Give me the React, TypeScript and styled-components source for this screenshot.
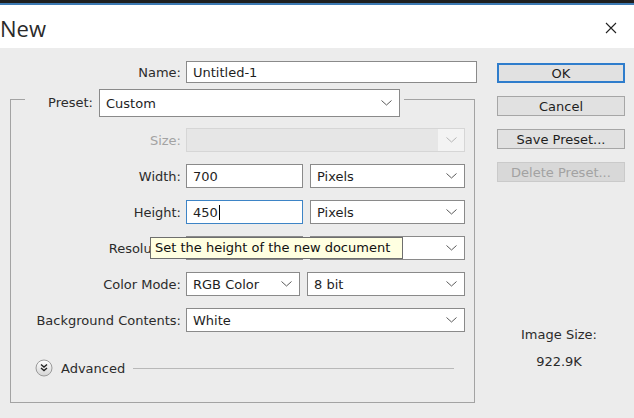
import React from "react";
import styled, { createGlobalStyle } from "styled-components";

const GlobalStyle = createGlobalStyle`
	html, body {
		margin: 0;
		padding: 0;
		background: #ececec;
		font-family: "DejaVu Sans", "Liberation Sans", sans-serif;
		font-size: 13px;
		color: #2b2b2b;
	}
`;

const Window = styled.div`
	width: 634px;
	height: 418px;
	display: flex;
	flex-direction: column;
	overflow: hidden;
	background: #ececec;
`;

const TopStrip = styled.div`
	height: 3px;
	background: #1f1f1f;
	border-bottom: 2px solid #3d7ab3;
`;

const TitleBar = styled.div`
	height: 43px;
	background: #ffffff;
	display: flex;
	align-items: center;
	justify-content: space-between;
	padding-right: 16px;
`;

const Title = styled.div`
	font-family: "Open Sans", "Noto Sans", sans-serif;
	font-size: 22px;
	color: #2a2a2a;
	margin-top: 2px;
`;

const CloseButton = styled.div`
	width: 14px;
	height: 14px;
	display: flex;
	align-items: center;
	justify-content: center;
	margin-top: 2px;
`;

const Body = styled.div`
	display: flex;
	flex: 1;
`;

const FormColumn = styled.div`
	width: 477px;
	display: flex;
	flex-direction: column;
`;

const Row = styled.div`
	display: grid;
	grid-template-columns: ${(p: { $label: number }) => p.$label}px 1fr;
	column-gap: 5px;
	align-items: center;
	height: 24px;
`;

const NameRow = styled(Row)`
	margin-top: 13px;
	height: 22px;
`;

const Label = styled.div<{ $disabled?: boolean }>`
	text-align: right;
	white-space: nowrap;
	overflow: hidden;
	color: ${(p) => (p.$disabled ? "#a3a3a3" : "#2b2b2b")};
`;

const Input = styled.div<{ $focused?: boolean; $width?: number }>`
	box-sizing: border-box;
	height: 100%;
	width: ${(p) => (p.$width ? `${p.$width}px` : "100%")};
	background: #ffffff;
	border: 1px solid ${(p) => (p.$focused ? "#3d84c6" : "#8a8a8a")};
	display: flex;
	align-items: center;
	padding-left: 6px;
	color: #1e1e1e;
	position: relative;
`;

const Caret = styled.span`
	display: inline-block;
	width: 1px;
	height: 15px;
	background: #000;
	margin-left: 1px;
`;

const Select = styled.div<{ $width?: number; $disabled?: boolean }>`
	box-sizing: border-box;
	height: 100%;
	width: ${(p) => (p.$width ? `${p.$width}px` : "auto")};
	flex: ${(p) => (p.$width ? "none" : "1")};
	background: ${(p) => (p.$disabled ? "#e6e6e6" : "#ffffff")};
	border: 1px solid ${(p) => (p.$disabled ? "#d6d6d6" : "#8a8a8a")};
	display: flex;
	align-items: center;
	justify-content: space-between;
	padding-left: 6px;
	color: #1e1e1e;
`;

const ChevronBox = styled.div<{ $disabled?: boolean }>`
	width: 26px;
	height: 100%;
	display: flex;
	align-items: center;
	justify-content: center;
	background: ${(p) => (p.$disabled ? "#f3f3f3" : "transparent")};
`;

const FieldPair = styled.div`
	display: flex;
	gap: 7px;
	height: 100%;
	position: relative;
`;

const Group = styled.fieldset`
	margin: 6px 2px 0 10px;
	padding: 0 9px 24px 0;
	border: 1px solid #a3a3a3;
	display: flex;
	flex-direction: column;
	gap: 12px;
	min-width: 0;
`;

const Legend = styled.legend`
	margin-left: 14px;
	padding: 0 4px;
	height: 20px;
	display: flex;
	align-items: flex-start;
	gap: 6px;
`;

const PresetLabel = styled.div`
	width: 64px;
	height: 28px;
	line-height: 28px;
	text-align: right;
`;

const PresetSelect = styled(Select)`
	height: 28px;
	flex: none;
	width: 301px;
`;

const FirstRow = styled(Row)`
	margin-top: 19px;
`;

const Tooltip = styled.div`
	position: absolute;
	left: -36px;
	top: 37px;
	width: 253px;
	height: 22px;
	box-sizing: border-box;
	background: #ffffe1;
	border: 1px solid #6e6e6e;
	color: #111;
	padding-left: 4px;
	line-height: 20px;
	white-space: nowrap;
	z-index: 2;
`;

const AdvancedRow = styled.div`
	margin-top: 14px;
	display: flex;
	align-items: center;
	height: 20px;
	padding-left: 24px;
	gap: 8px;
`;

const AdvancedRule = styled.div`
	flex: 1;
	height: 1px;
	background: #b8b8b8;
	margin: 0 11px 0 0;
`;

const ButtonColumn = styled.div`
	width: 128px;
	margin-left: 20px;
	padding-top: 15px;
	display: flex;
	flex-direction: column;
	gap: 13px;
`;

const Button = styled.div<{ $primary?: boolean; $disabled?: boolean }>`
	box-sizing: border-box;
	height: 20px;
	display: flex;
	align-items: center;
	justify-content: center;
	background: ${(p) => (p.$disabled ? "#d8d8d8" : "#e1e1e1")};
	border: ${(p) => (p.$primary ? "2px solid #2f7dcc" : p.$disabled ? "1px solid #cacaca" : "1px solid #a6a6a6")};
	color: ${(p) => (p.$disabled ? "#a2a2a2" : "#1e1e1e")};
`;

const ImageSize = styled.div`
	margin-top: 132px;
	margin-right: 4px;
	display: flex;
	flex-direction: column;
	align-items: center;
	gap: 11px;
	line-height: 16px;
	color: #2b2b2b;
`;

const Chevron: React.FC<{ disabled?: boolean }> = ({ disabled }) => (
	<svg width="11" height="6" viewBox="0 0 11 6">
		<path d="M0.5 0.5 L5.5 5 L10.5 0.5" fill="none" stroke={disabled ? "#b5b5b5" : "#5a5a5a"} strokeWidth="1" />
	</svg>
);

const DropDown: React.FC<{ value?: string; width?: number; disabled?: boolean }> = ({ value, width, disabled }) => (
	<Select $width={width} $disabled={disabled}>
		<span>{value}</span>
		<ChevronBox $disabled={disabled}>
			<Chevron disabled={disabled} />
		</ChevronBox>
	</Select>
);

const AdvancedIcon = () => (
	<svg width="18" height="18" viewBox="0 0 18 18">
		<defs>
			<linearGradient id="adv" x1="0" y1="0" x2="0" y2="1">
				<stop offset="0" stopColor="#ffffff" />
				<stop offset="1" stopColor="#d4d4d4" />
			</linearGradient>
		</defs>
		<circle cx="9" cy="9" r="8" fill="url(#adv)" stroke="#9a9a9a" />
		<path d="M6 5.5 L9 8 L12 5.5 M6 9 L9 11.5 L12 9" fill="none" stroke="#222" strokeWidth="1.4" />
	</svg>
);

const LABEL_W = 170;

export default function App() {
	return (
		<>
			<GlobalStyle />
			<Window>
				<TopStrip />
				<TitleBar>
					<Title>New</Title>
					<CloseButton>
						<svg width="12" height="12" viewBox="0 0 12 12">
							<path d="M1 1 L11 11 M11 1 L1 11" stroke="#222" strokeWidth="1.1" />
						</svg>
					</CloseButton>
				</TitleBar>
				<Body>
					<FormColumn>
						<NameRow $label={181}>
							<Label>Name:</Label>
							<Input>Untitled-1</Input>
						</NameRow>
						<Group>
							<Legend>
								<PresetLabel>Preset:</PresetLabel>
								<PresetSelect>
									<span>Custom</span>
									<ChevronBox>
										<Chevron />
									</ChevronBox>
								</PresetSelect>
							</Legend>
							<FirstRow $label={LABEL_W}>
								<Label $disabled>Size:</Label>
								<DropDown disabled />
							</FirstRow>
							<Row $label={LABEL_W}>
								<Label>Width:</Label>
								<FieldPair>
									<Input $width={117}>700</Input>
									<DropDown value="Pixels" />
								</FieldPair>
							</Row>
							<Row $label={LABEL_W}>
								<Label>Height:</Label>
								<FieldPair>
									<Input $width={117} $focused>
										450
										<Caret />
									</Input>
									<DropDown value="Pixels" />
									<Tooltip>Set the height of the new document</Tooltip>
								</FieldPair>
							</Row>
							<Row $label={LABEL_W}>
								<Label>Resolution:</Label>
								<FieldPair>
									<Input $width={117} />
									<DropDown />
								</FieldPair>
							</Row>
							<Row $label={LABEL_W}>
								<Label>Color Mode:</Label>
								<FieldPair>
									<DropDown value="RGB Color" width={114} />
									<DropDown value="8 bit" />
								</FieldPair>
							</Row>
							<Row $label={LABEL_W}>
								<Label>Background Contents:</Label>
								<DropDown value="White" />
							</Row>
							<AdvancedRow>
								<AdvancedIcon />
								<span>Advanced</span>
								<AdvancedRule />
							</AdvancedRow>
						</Group>
					</FormColumn>
					<ButtonColumn>
						<Button $primary>OK</Button>
						<Button>Cancel</Button>
						<Button>Save Preset...</Button>
						<Button $disabled>Delete Preset...</Button>
						<ImageSize>
							<span>Image Size:</span>
							<span>922.9K</span>
						</ImageSize>
					</ButtonColumn>
				</Body>
			</Window>
		</>
	);
}
